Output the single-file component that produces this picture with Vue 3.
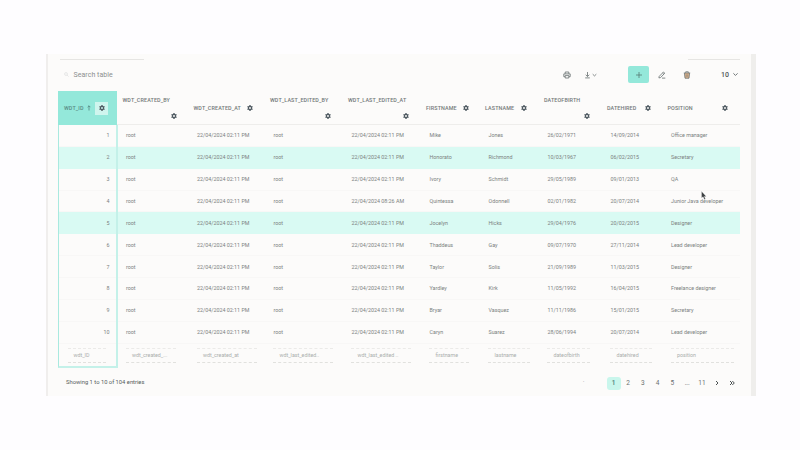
<script setup>
const columns = [
  { name: 'WDT_CREATED_BY', foot: 'wdt_created_...', wrap: true, gear: 54.5, line: 50 },
  { name: 'WDT_CREATED_AT', foot: 'wdt_created_at', gear: 57.5, line: 60 },
  { name: 'WDT_LAST_EDITED_BY', foot: 'wdt_last_edited..', wrap: true, gear: 61, line: 60 },
  { name: 'WDT_LAST_EDITED_AT', foot: 'wdt_last_edited ..', wrap: true, gear: 61, line: 60 },
  { name: 'FIRSTNAME', foot: 'firstname', gear: 40.5, line: 40 },
  { name: 'LASTNAME', foot: 'lastname', gear: 39.5, line: 42 },
  { name: 'DATEOFBIRTH', foot: 'dateofbirth', wrap: true, gear: 46, line: 43 },
  { name: 'DATEHIRED', foot: 'datehired', gear: 41.5, line: 42 },
  { name: 'POSITION', foot: 'position', gear: 58, line: 63 },
]
const at = '22/04/2024 02:11 PM'
const people = [
  ['Mike', 'Jones', '26/02/1971', '14/09/2014', 'Office manager'],
  ['Honorato', 'Richmond', '10/03/1967', '06/02/2015', 'Secretary'],
  ['Ivory', 'Schmidt', '29/05/1989', '09/01/2013', 'QA'],
  ['Quintessa', 'Odonnell', '02/01/1982', '20/07/2014', 'Junior Java developer'],
  ['Jocelyn', 'Hicks', '29/04/1976', '20/02/2015', 'Designer'],
  ['Thaddeus', 'Gay', '09/07/1970', '27/11/2014', 'Lead developer'],
  ['Taylor', 'Solis', '21/09/1989', '11/03/2015', 'Designer'],
  ['Yardley', 'Kirk', '11/05/1992', '16/04/2015', 'Freelance designer'],
  ['Bryar', 'Vasquez', '11/11/1986', '15/01/2015', 'Secretary'],
  ['Caryn', 'Suarez', '28/06/1994', '20/07/2014', 'Lead developer'],
]
const rows = people.map((p, i) => ['root', at, 'root', i === 3 ? '22/04/2024 08:26 AM' : at, ...p])
const highlighted = [1, 4]
const pages = ['1', '2', '3', '4', '5', '...', '11']
const gearPath =
  'M4.8 0h2.4l.4 1.8 1 .6 1.8-.6 1.2 2.1L10.2 5.200v1.600l1.400 1.300-1.200 2.100-1.800-.6-1 .6-.4 1.800H4.800l-.4-1.800-1-.6-1.800.6L.4 8.100 1.800 6.800V5.200L.4 3.900l1.200-2.100 1.800.6 1-.6zM6 4.100a1.900 1.900 0 1 0 0 3.800 1.900 1.900 0 0 0 0-3.800z'
</script>

<template>
  <main class="page">
    <section class="panel">
      <div class="hairlines"><i class="left-line"></i><i class="right-line"></i></div>
      <header class="toolbar">
        <label class="search">
          <svg class="search-icon" viewBox="0 0 6 6"><circle cx="2.4" cy="2.4" r="1.7" /><path d="M3.8 3.8 5.5 5.5" /></svg>
          <span>Search table</span>
        </label>
        <svg class="tool print" viewBox="0 0 8 8"><path d="M2.2 2.7V1h3.6v1.7M2 5.7H.8V2.9h6.4v2.8H6M2.2 4.6h3.6V7H2.2z" /></svg>
        <svg class="tool download" viewBox="0 0 14 8"><path d="M3.5 1v4.3M1.7 3.8l1.8 1.7 1.8-1.7M1.2 6.9h4.6M8.7 3.2l1.8 1.7 1.8-1.7" /></svg>
        <button class="add"><svg viewBox="0 0 8 8"><path d="M4 1v6M1 4h6" /></svg></button>
        <svg class="tool edit" viewBox="0 0 8 8"><path d="M1.2 5.4 5.5 1l1.3 1.2-4.3 4.4-1.6.3zM4.6 2l1.2 1.2M4 7.1h3.3" /></svg>
        <svg class="tool trash" viewBox="0 0 8 8"><path class="bin" d="M1.5 2h5L6 7.200H2z" /><path d="M.8 2h6.400M2.700 1.800V.8h2.600v1M1.500 2.200 2 7.200h4l.5-5" /><path class="slats" d="M3.300 3.300v2.600M4.700 3.300v2.600" /></svg>
        <span class="length">10</span>
        <svg class="tool chevron" viewBox="0 0 6 6"><path d="M1.2 2 3 3.8 4.8 2" /></svg>
      </header>

      <div class="table">
        <div class="row head">
          <div class="id-head">
            <span>WDT_ID</span>
            <svg class="sort" viewBox="0 0 4 6"><path d="M2 5.5V.8M.6 2.2 2 .8l1.4 1.4" /></svg>
            <span class="gear-box"><svg class="gear" viewBox="0 0 12 12"><path :d="gearPath" /></svg></span>
          </div>
          <div v-for="c in columns" :key="c.name" class="th" :class="{ wrap: c.wrap }">
            <span class="name">{{ c.name }}</span>
            <span class="gear-slot" :style="{ width: c.gear + 'px' }">
              <svg class="gear" viewBox="0 0 12 12"><path :d="gearPath" /></svg>
            </span>
          </div>
        </div>
        <div v-for="(r, i) in rows" :key="i" class="row body" :class="{ mint: highlighted.includes(i) }">
          <div class="num">{{ i + 1 }}</div>
          <div v-for="(v, j) in r" :key="j" class="td">{{ v }}</div>
        </div>
        <div class="row foot">
          <div class="filter first"><span class="field">wdt_ID</span></div>
          <div v-for="c in columns" :key="c.foot" class="filter">
            <span class="field" :style="{ width: c.line + 'px' }">{{ c.foot }}</span>
          </div>
        </div>
        <div class="column-outline"></div>
      </div>

      <footer class="bottom">
        <span class="info">Showing 1 to 10 of 104 entries</span>
        <nav class="pager">
          <span class="dot">·</span>
          <span v-for="p in pages" :key="p" class="pg" :class="{ current: p === '1' }">{{ p }}</span>
          <span class="pg"><svg viewBox="0 0 6 6"><path d="M2 1l2 2-2 2" /></svg></span>
          <span class="pg"><svg viewBox="0 0 6 6"><path d="M1 1l2 2-2 2M3.3 1l2 2-2 2" /></svg></span>
        </nav>
      </footer>
      <svg class="cursor" viewBox="0 0 6 9"><path d="M.5.3v6.8l1.6-1.3 1.2 2.7 1.2-.6-1.2-2.5h2z" /></svg>
    </section>
  </main>
</template>

<style>
body { background: #fefdff; }
</style>

<style scoped>
* { box-sizing: border-box; }
.page {
  width: 800px; height: 450px; padding: 54px 44px 0 46px; overflow: hidden;
  background: #fefdff; font-family: Roboto, "Liberation Sans", sans-serif; color: #747978;
}
.panel {
  position: relative; width: 710px; height: 342px; padding: 0 10px;
  background: #fcfbfa; border-left: 2px solid #f0eeed; border-right: 5px solid #efeeec;
}
svg { display: block; fill: none; stroke: #656d6d; stroke-width: 0.8; flex: none; }
.hairlines { height: 11px; padding: 5px 1px 0 2px; display: flex; justify-content: space-between; }
.hairlines i { height: 1px; background: #e6e5e3; }
.left-line { width: 84px; }
.right-line { width: 52px; }
.toolbar { height: 19px; display: flex; align-items: center; }
.search { width: 505px; padding-left: 6px; display: flex; align-items: center; font-size: 7px; letter-spacing: 0.05px; color: #8c8f8f; }
.search-icon { width: 5px; height: 5px; margin-right: 4.5px; stroke: #cfd0d0; stroke-width: 0.6; }
.tool { height: 8px; }
.print { width: 8px; }
.download { width: 14px; margin-left: 13px; }
.add {
  width: 21px; height: 17px; margin-left: 30px; padding: 0; border: 0; border-radius: 2px;
  background: #94e8da; display: flex; align-items: center; justify-content: center;
}
.add svg { width: 8px; height: 8px; stroke: #557b73; }
.edit { width: 8px; margin-left: 9px; }
.trash { width: 8px; margin-left: 16.500px; }
.trash .bin { fill: #e3b78f; stroke: none; }
.trash .slats { stroke-width: 0.5; }
.length { width: 14px; margin-left: 30.500px; font-size: 7px; font-weight: 500; color: #4f5556; }
.chevron { width: 7px; height: 7px; margin-left: -3.5px; }

.table { position: relative; width: 682px; margin-top: 7px; }
.row {
  display: grid;
  grid-template-columns: 60.5px 71px 76.5px 78px 78px 59px 59px 63px 60.5px 76.5px;
}
.head { height: 34px; font-size: 5.4px; font-weight: 500; letter-spacing: 0.12px; color: #737979; border-bottom: 1px solid #eeedeb; }
.id-head { width: 59px; height: 34px; display: flex; align-items: center; padding-left: 6px; background: #94e8da; color: #5a8d86; }
.sort { width: 4px; height: 6px; margin-left: 3px; stroke: #497a74; stroke-width: 0.7; }
.gear-box { width: 13px; height: 13px; margin-left: 4.5px; display: flex; align-items: center; justify-content: center; background: #cff5ee; }
.gear { width: 6px; height: 6px; fill: #4e5961; fill-rule: evenodd; stroke: none; }
.th { padding-left: 4px; display: grid; align-items: center; white-space: nowrap; }
.name, .gear-slot { grid-area: 1 / 1; }
.gear-slot { display: flex; justify-content: flex-end; margin-left: 2px; }
.th.wrap { align-content: center; row-gap: 8px; }
.th.wrap .gear-slot { grid-area: 2 / 1; height: 7px; margin-left: 0; align-items: center; }
.wrap .name { line-height: 7px; }
.body {
  height: 21.87px; align-items: center; font-size: 5.35px;
  color: #7b8180; border-bottom: 1px solid #f8f7f6;
}
.body.mint { background: #d9faf3; border-color: #d9faf3; }
.num { padding-right: 9px; text-align: right; }
.td { padding-left: 7.5px; white-space: nowrap; }
.foot { height: 24px; align-items: center; font-size: 5.3px; color: #aaaeac; }
.filter { padding-left: 7px; }
.filter.first { padding-left: 10px; }
.field {
  display: block; width: 38px; height: 15px; padding-left: 6.5px; line-height: 13px;
  border-top: 1px dashed #ebeae8; border-bottom: 1px dashed #e1e1de; white-space: nowrap; overflow: hidden;
}
.first .field { padding-left: 5.5px; }
.column-outline {
  position: absolute; left: 0; top: 34px; width: 60px; height: 242.5px;
  border: 2px solid #c4f1e9; border-top: 0; border-left: 1px solid #a9e9df; pointer-events: none;
}
.bottom { height: 20px; margin-top: 7.5px; padding-left: 8px; display: flex; justify-content: space-between; align-items: flex-start; }
.info { margin-top: 2.5px; font-size: 5.8px; line-height: 8px; color: #555b5b; }
.pager { display: flex; margin: -1.5px 2px 0 0; font-size: 6.5px; color: #6a7070; }
.pg { width: 14.8px; height: 13px; margin-top: 3px; display: flex; align-items: center; justify-content: center; }
.dot { width: 24px; line-height: 17px; color: #aaa; }
.pg svg { width: 6px; height: 6px; stroke: #4b5152; stroke-width: 1; }
.current { background: #c9f6ec; border-radius: 3px; color: #4b8178; font-weight: 500; width: 14px; }
.cursor { position: absolute; left: 653px; top: 137px; width: 6px; height: 9px; fill: #3e4244; stroke: #fff; stroke-width: 0.3; }
</style>
